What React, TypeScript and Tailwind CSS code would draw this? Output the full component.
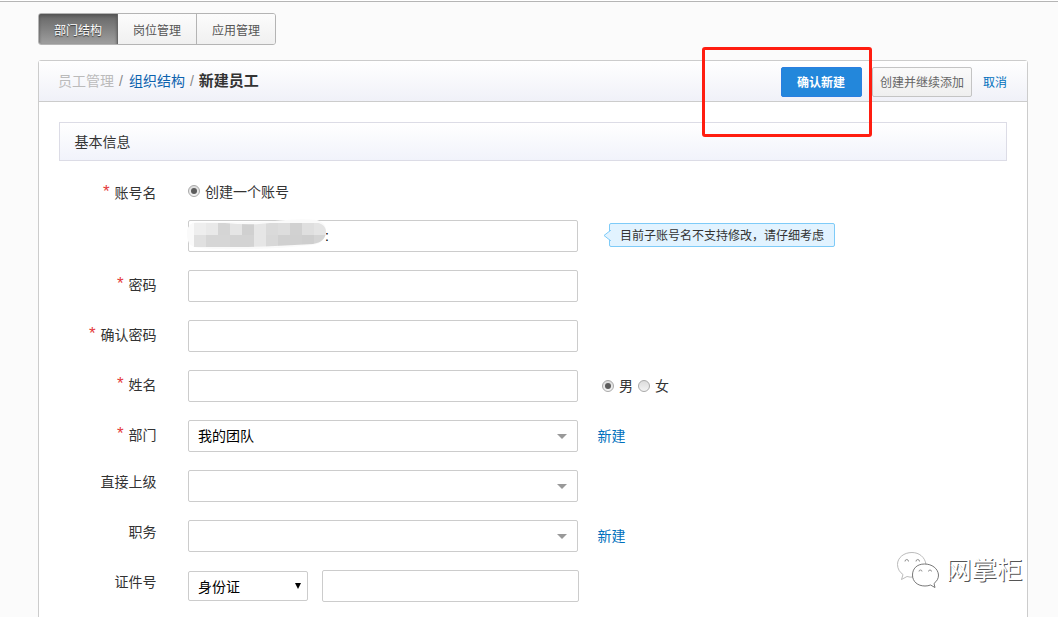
import type { ReactNode } from 'react';

const mosaic = [
  ['#eeeeee', '#e9e9e9', '#d5d5d5', '#e5e5e5', '#d0d0d0', '#e6e6e6', '#dadada', '#dddddd', '#d1d1d1', '#dfdfdf', '#e4e4e4'],
  ['#e0e0e0', '#d6d6d6', '#d6d6d6', '#d3d3d3', '#d3d3d3', '#e6e6e6', '#d8d8d8', '#d0d0d0', '#d0d0d0', '#cecece', '#d4d4d4'],
];

function Masked() {
  return (
    <svg className="absolute -left-[4px] -top-[4px]" width="146" height="34" viewBox="0 0 146 34">
      <defs>
        <clipPath id="smear">
          <path d="M9 6 H40 Q60 8 74 7 Q100 4 125 5 Q140 5 141 14 Q141 25 128 27 Q110 28 90 29 Q50 31 9 30 Z" />
        </clipPath>
      </defs>
      <path d="M2 18 Q1 6 12 5 Q60 6 90 4 Q115 1 132 3 Q142 6 141 15 Q140 27 127 28 Q90 32 60 32 Q25 33 9 30 Q2 27 2 18Z" fill="#fafafa" />
      <g clipPath="url(#smear)" shapeRendering="crispEdges">
        {mosaic.map((row, y) =>
          row.map((fill, x) => <rect key={`${x}-${y}`} x={9 + x * 12} y={6 + y * 12} width="12" height="12" fill={fill} />),
        )}
      </g>
    </svg>
  );
}

function Radio({ checked = false }: { checked?: boolean }) {
  return (
    <span className="mb-px flex h-3 w-3 shrink-0 items-center justify-center rounded-full border border-[#a9a9a9] bg-linear-to-b from-[#dcdcdc] to-[#f3f3f3]">
      {checked && <span className="h-[6px] w-[6px] rounded-full bg-[#5c5c5c]" />}
    </span>
  );
}

function Label({ text, required = false }: { text: string; required?: boolean }) {
  return (
    <div className={`flex w-[118px] shrink-0 justify-end pr-[0.5px] leading-5 ${required ? 'pt-[5px]' : 'pt-[2px]'}`}>
      {required && <span className="-mt-px mr-[5px] text-[17px] leading-5 text-[#e4393c]">*</span>}
      <span>{text}</span>
    </div>
  );
}

function Field({ children }: { children?: ReactNode }) {
  return (
    <div className="relative flex h-8 w-[390px] shrink-0 items-center rounded-[2px] border border-[#ccc] bg-white pl-[9px] pr-[10px] text-black">
      {children}
    </div>
  );
}

function Caret() {
  return (
    <svg className="ml-auto mt-px" width="10" height="5" viewBox="0 0 10 5">
      <path d="M0 0H10L5 5Z" fill="#999" />
    </svg>
  );
}

function Row({ label, required, children }: { label: string; required?: boolean; children: ReactNode }) {
  return (
    <div className="flex h-8">
      <Label text={label} required={required} />
      <div className="ml-[31px] flex h-8 items-center">{children}</div>
    </div>
  );
}

function Create() {
  return <a className="ml-[19.5px] text-[#0070bc]">新建</a>;
}

function Watermark() {
  return (
    <div className="absolute left-[896px] top-[550px] flex items-center">
      <svg width="44" height="38" viewBox="0 0 44 38" fill="#fff" stroke="#777" strokeWidth="0.8">
        <path d="M16 1.5C8 1.5 1.500 6.500 1.500 13.500C1.500 18 4 21.500 7 23.500L5.500 28.500L11 25.500Q14 26.500 18 26C26 25 30 20 30 13.500C29 6 23 1.500 16 1.500Z" stroke="#aaa" />
        <path d="M28.500 13C20.500 13 16.500 18 16.500 24C16.500 30.500 21.500 35 29 35Q32 35 34.500 34L39 36.500L38 32.500C41 30 42.500 27.500 42.500 24C42 17.500 36 13 28.500 13Z" stroke="#555" />
        <path d="M9 10.500Q9 8.500 10.800 8.500Q12.500 8.500 12.500 10.500M20 10.500Q20 8.500 21.800 8.500Q23.500 8.500 23.500 10.500M23 20.500Q23 19 24.500 19Q26 19 26 20.500M32.500 20.500Q32.500 19 34 19Q35.500 19 35.500 20.500" fill="none" />
      </svg>
      <span className="ml-[6px] whitespace-nowrap text-[25.500px] leading-[38px] text-white [text-shadow:1px_1px_0_#555]">网掌柜</span>
    </div>
  );
}

export default function App() {
  return (
    <div className="relative h-[617px] w-[1058px] overflow-hidden border-t border-white bg-[#fbfbfb] font-['Liberation_Sans','Noto_Sans_CJK_SC',sans-serif] text-[14px] text-[#333]">
      <div className="h-px bg-[#b5b5b5]" />
      <nav className="ml-[38px] mt-[11px] flex h-8 w-[238px] overflow-hidden rounded-[3px] border border-[#b4b4b4] text-[12px] leading-[34px] text-[#555]">
        <div className="w-[79px] border-r border-[#666] bg-linear-to-b from-[#666] to-[#9f9f9f] text-center text-white shadow-[inset_0_2px_3px_#555] [text-shadow:0_1px_1px_#333]">部门结构</div>
        <div className="w-[79px] border-r border-[#b4b4b4] bg-linear-to-b from-[#fcfcfc] to-[#f0f0f0] text-center">岗位管理</div>
        <div className="grow bg-linear-to-b from-[#fcfcfc] to-[#f0f0f0] text-center">应用管理</div>
      </nav>

      <main className="ml-[38px] mt-[15px] h-[600px] w-[990px] rounded-t-[3px] border border-[#ccc] bg-white">
        <header className="flex h-[41px] items-center border-b border-[#ccc] bg-linear-to-b from-white to-[#f0f1f8] pl-[19px] pr-[20px]">
          <span className="text-[#bbb]">员工管理</span>
          <span className="ml-[5px] mr-[6px] text-[#888]">/</span>
          <a className="text-[#0b62ae]">组织结构</a>
          <span className="mx-[5px] text-[#888]">/</span>
          <b className="text-[15px]">新建员工</b>
          <button className="ml-auto mt-[2px] h-[30px] w-[81px] rounded-[2px] border border-[#2a7ee0] bg-[#2387db] pr-px pt-px text-[12px] font-bold text-white">确认新建</button>
          <button className="ml-[10px] mt-[2px] h-[30px] w-[100px] rounded-[2px] border border-[#c4c4c4] bg-linear-to-b from-[#fafafa] to-[#efefef] pt-px text-[12px] text-[#666]">创建并继续添加</button>
          <a className="ml-[11px] mt-[4px] text-[12px] text-[#0070bc]">取消</a>
        </header>

        <h2 className="mx-[20px] mt-[20px] h-[39px] border border-[#dcdce6] bg-linear-to-b from-white to-[#f1f3fb] pl-[14.5px] text-[14px] font-normal leading-[38px]">基本信息</h2>

        <form>
          <div className="flex h-[59px] pt-[17px]">
            <Label text="账号名" required />
            <div className="ml-[31px] flex h-[26px] items-center">
              <Radio checked />
              <span className="ml-[5px] mt-[2px]">创建一个账号</span>
            </div>
          </div>

          <div className="ml-[149px] flex h-8 items-center">
            <Field>
              <span className="ml-[127px] text-[14px]">:</span>
              <Masked />
            </Field>
            <div className="relative ml-[31px] mb-[2px] h-6 w-[226px] rounded-[2px] border border-[#7ecbf8] bg-[#e2f3ff] text-center text-[12px] leading-[25px] text-[#333]">
              <svg className="absolute -left-[7px] top-[6px]" width="8" height="11" viewBox="0 0 8 11">
                <path d="M8 0L1 5.500L8 11" fill="#e2f3ff" stroke="#7ecbf8" />
              </svg>
              目前子账号名不支持修改，请仔细考虑
            </div>
          </div>

          <div className="mt-[18px] flex flex-col gap-[18px]">
            <Row label="密码" required><Field /></Row>
            <Row label="确认密码" required><Field /></Row>
            <Row label="姓名" required>
              <Field />
              <div className="ml-[24px] flex items-center">
                <Radio checked />
                <span className="ml-[5px]">男</span>
                <span className="ml-[5px] flex"><Radio /></span>
                <span className="ml-[5px]">女</span>
              </div>
            </Row>
            <Row label="部门" required><Field>我的团队<Caret /></Field><Create /></Row>
            <Row label="直接上级"><Field><Caret /></Field></Row>
            <Row label="职务"><Field><Caret /></Field><Create /></Row>
            <Row label="证件号">
              <div className="flex h-[30px] w-[120px] items-center rounded-[2px] border border-[#ccc] pl-[9px] pr-[6px] text-black">
                <span className="mt-[2px]">身份证</span>
                <svg className="ml-auto" width="6" height="6" viewBox="0 0 6 6"><path d="M0 0H6L3 6Z" /></svg>
              </div>
              <div className="ml-[14px] h-8 w-[257px] rounded-[2px] border border-[#ccc]" />
            </Row>
          </div>
        </form>
      </main>

      <div className="absolute left-[702px] top-[46px] h-[90px] w-[170px] rounded-[3px] border-[3px] border-[#ff1d10]" />
      <Watermark />
    </div>
  );
}
